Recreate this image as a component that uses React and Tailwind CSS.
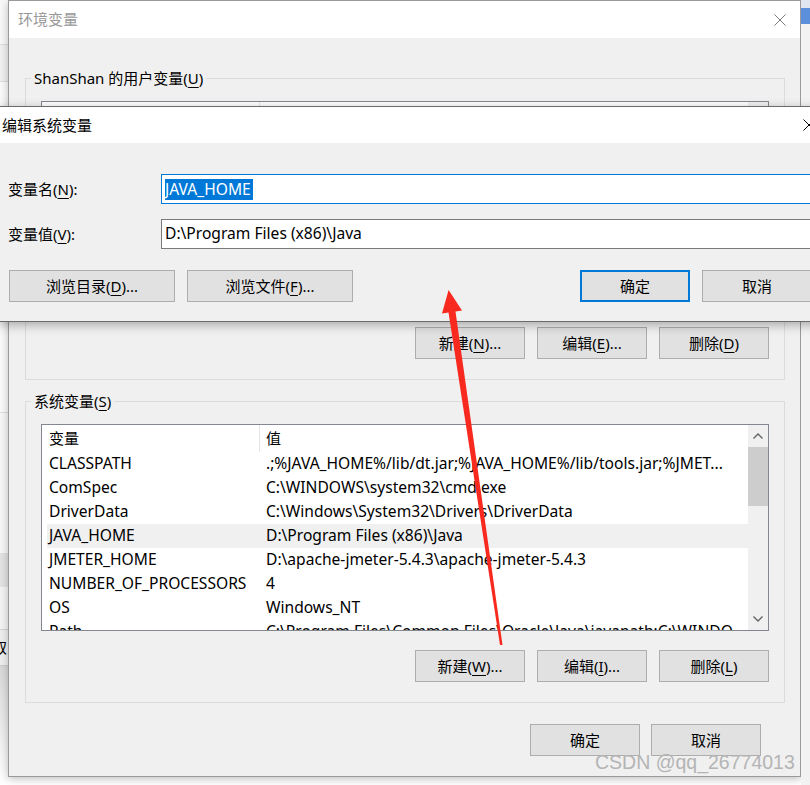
import React from "react";

// rows of the system variables list
const sysVars = [
  ["CLASSPATH", ".;%JAVA_HOME%/lib/dt.jar;%JAVA_HOME%/lib/tools.jar;%JMET..."],
  ["ComSpec", "C:\\WINDOWS\\system32\\cmd.exe"],
  ["DriverData", "C:\\Windows\\System32\\Drivers\\DriverData"],
  ["JAVA_HOME", "D:\\Program Files (x86)\\Java"],
  ["JMETER_HOME", "D:\\apache-jmeter-5.4.3\\apache-jmeter-5.4.3"],
  ["NUMBER_OF_PROCESSORS", "4"],
  ["OS", "Windows_NT"],
  ["Path", "C:\\Program Files\\Common Files\\Oracle\\Java\\javapath;C:\\WINDO..."],
];

const U = ({ children }) => (
  <span className="underline decoration-1 underline-offset-[3px]">{children}</span>
);

const CloseX = ({ color = "#000" }) => (
  <svg width="12" height="12" viewBox="0 0 12 12">
    <path d="M0.5 0.5 L11.5 11.5 M11.5 0.5 L0.5 11.5" stroke={color} strokeWidth="1" fill="none" />
  </svg>
);

const Btn = ({ children, primary = false, className = "" }) => (
  <div
    className={`flex h-[32px] items-center justify-center bg-[#e1e1e1] text-[15px] text-black ${
      primary ? "border-2 border-[#0078d7]" : "border border-[#adadad]"
    } ${className}`}
  >
    {children}
  </div>
);

const Chevron = ({ up }) => (
  <svg width="10" height="6" viewBox="0 0 10 6">
    <path
      d={up ? "M0.5 5.5 L5 1 L9.5 5.5" : "M0.5 0.5 L5 5 L9.5 0.5"}
      stroke="#606060"
      strokeWidth="1.3"
      fill="none"
    />
  </svg>
);

const ListBox = ({ rows }) => (
  <div className="flex h-[207px] border border-[#828790] bg-white">
    <div className="flex-1 overflow-hidden pl-[5px]">
      {/* header */}
      <div className="flex h-[27px] items-center text-[15px]">
        <div className="w-[212px] pl-[2px]">{rows.length ? "变量" : ""}</div>
        <div className="h-full w-px bg-[#e5e5e5]" />
        <div className="pl-[6px]">{rows.length ? "值" : ""}</div>
      </div>
      {rows.map(([name, value]) => (
        <div
          key={name}
          className={`flex h-[24px] items-center whitespace-nowrap text-[15.6px] ${
            name === "JAVA_HOME" ? "bg-[#f0f0f0]" : ""
          }`}
        >
          <div className="w-[217px] shrink-0 pl-[2px]">{name}</div>
          <div className="pl-[2px]">{value}</div>
        </div>
      ))}
    </div>
    {/* scrollbar */}
    <div className="flex w-[20px] flex-col bg-[#f0f0f0]">
      <div className="flex h-[22px] items-center justify-center">
        <Chevron up />
      </div>
      <div className="h-[59px] bg-[#cdcdcd]" />
      <div className="flex-1" />
      <div className="flex h-[22px] items-center justify-center">
        <Chevron />
      </div>
    </div>
  </div>
);

const GroupBox = ({ label, rows, buttons }) => (
  <div className="relative h-[302px] border border-[#dcdcdc] px-[15px] pt-[22px]">
    <div className="absolute -top-[11px] left-[5px] bg-[#f0f0f0] px-[3px] text-[15px] leading-[20px]">
      {label}
    </div>
    <ListBox rows={rows} />
    <div className="mt-[19px] flex justify-end gap-[12px]">
      {buttons.map((b, i) => (
        <Btn key={i} className="w-[110px]">
          {b}
        </Btn>
      ))}
    </div>
  </div>
);

export default function App() {
  return (
    <div className="relative h-[785px] w-[810px] overflow-hidden bg-white font-['Noto_Sans','Noto_Sans_CJK_SC',sans-serif] text-black">
      <div className="flex h-full">
        {/* window behind, left edge */}
        <div className="flex w-[8px] flex-col">
          <div className="h-[44px] bg-[#f8f8f8]" />
          <div className="h-[37px] border-t border-[#dddddd] bg-[#f0f0f0]" />
          <div className="h-[331px] border-t border-[#dddddd] bg-[#fafafa]" />
          <div className="h-[141px] border-t border-[#dddddd] bg-[#f7f7f7]" />
          <div className="h-[34px] bg-[#e2e2e2]" />
          <div className="h-[43px] border-b border-[#d5d5d5] bg-[#f4f4f4]" />
          <div className="flex h-[36px] items-center overflow-hidden border-b border-[#cccccc] bg-[#eeeeee]">
            <span className="-ml-[8px] text-[15px]">取</span>
          </div>
          <div className="flex-1 bg-gradient-to-b from-[#d8d8d8] to-white" />
        </div>

        {/* 环境变量 window */}
        <div className="flex h-[777px] w-[793px] shrink-0 flex-col border border-[#9a9a9a] bg-[#f0f0f0] shadow-[0_2px_8px_rgba(0,0,0,0.25)]">
          <div className="flex h-[37px] items-center justify-between bg-white pl-[9px] pr-[14px]">
            <span className="text-[15px] text-[#999999]">环境变量</span>
            <CloseX color="#7a7a7a" />
          </div>
          <div className="flex flex-1 flex-col pl-[16px] pr-[15px] pt-[40px]">
            <GroupBox
              label={
                <>
                  ShanShan 的用户变量(<U>U</U>)
                </>
              }
              rows={[]}
              buttons={[
                <>新建(<U>N</U>)...</>,
                <>编辑(<U>E</U>)...</>,
                <>删除(<U>D</U>)</>,
              ]}
            />
            <div className="mt-[21px]">
              <GroupBox
                label={
                  <>
                    系统变量(<U>S</U>)
                  </>
                }
                rows={sysVars}
                buttons={[
                  <>新建(<U>W</U>)...</>,
                  <>编辑(<U>I</U>)...</>,
                  <>删除(<U>L</U>)</>,
                ]}
              />
            </div>
            <div className="mt-[21px] flex justify-end gap-[11px] pr-[24px]">
              <Btn className="w-[110px]">确定</Btn>
              <Btn className="w-[110px]">取消</Btn>
            </div>
          </div>
        </div>

        {/* desktop to the right */}
        <div className="flex flex-1 flex-col">
          <div className="h-[8px] bg-[#dfe6f0]" />
          <div className="h-[16px] bg-[#5b8fdc]" />
          <div className="flex-1 bg-[#f2f2f2]" />
        </div>
      </div>

      {/* 编辑系统变量 dialog on top */}
      <div className="absolute -left-px top-[106px] w-[830px] border-y border-[#6b6b6b] shadow-[0_3px_10px_rgba(0,0,0,0.3)]">
        <div className="flex h-[36px] items-center justify-between bg-white pl-[3px] pr-[14px]">
          <span className="text-[15px]">编辑系统变量</span>
          <CloseX />
        </div>
        <div className="h-[178px] bg-[#f0f0f0] pt-[31px]">
          <div className="flex items-center pl-[9px]">
            <div className="w-[153px] text-[15px]">
              变量名(<U>N</U>):
            </div>
            <div className="mr-[10px] flex h-[30px] flex-1 items-center border border-[#0078d7] bg-white pl-[3px]">
              <span className="bg-[#0078d7] pr-[2px] text-[15.6px] leading-[21px] text-white">JAVA_HOME</span>
            </div>
          </div>
          <div className="mt-[15px] flex items-center pl-[9px]">
            <div className="w-[153px] text-[15px]">
              变量值(<U>V</U>):
            </div>
            <div className="mr-[10px] flex h-[30px] flex-1 items-center border border-[#7a7a7a] bg-white pl-[3px]">
              <span className="text-[15.6px]">D:\Program Files (x86)\Java</span>
            </div>
          </div>
          <div className="mt-[21px] flex pl-[10px]">
            <Btn className="w-[166px]">
              浏览目录(<U>D</U>)...
            </Btn>
            <Btn className="ml-[12px] w-[166px]">
              浏览文件(<U>F</U>)...
            </Btn>
            <Btn primary className="ml-[227px] w-[110px]">
              确定
            </Btn>
            <Btn className="ml-[12px] w-[110px]">取消</Btn>
          </div>
        </div>
      </div>

      {/* red annotation arrow */}
      <svg className="pointer-events-none absolute left-0 top-0" width="810" height="785">
        <polygon
          points="500,645 502.5,645 455.5,311.5 462,310.6 448.6,290 442,313.4 448.5,312.5"
          fill="#f8291f"
        />
      </svg>

      {/* watermark */}
      <div className="pointer-events-none absolute left-[595px] top-[750px] font-['Liberation_Sans',sans-serif] text-[19.5px] leading-[24px] text-[#b4b4b4]">
        CSDN @qq_26774013
      </div>
    </div>
  );
}
